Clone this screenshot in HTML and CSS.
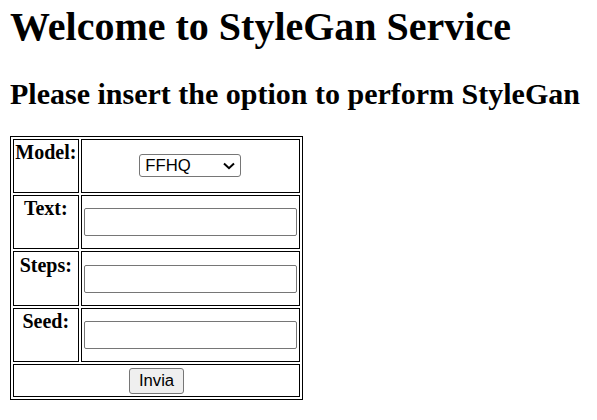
FILE: index.html
```html
<!DOCTYPE html>
<html>
<head>
<meta charset="utf-8">
<title>StyleGan Service</title>
<link rel="stylesheet" href="styles.css">
</head>
<body>
<h1 class="title">Welcome to StyleGan Service</h1>
<h2 class="subtitle">Please insert the option to perform StyleGan</h2>
<form class="form">
<table class="opts">
<tr class="row">
<th class="label">Model:</th>
<td class="field field-center"><span class="select-wrap"><select class="select"><option>FFHQ</option></select><svg class="chev" width="12" height="8" viewBox="0 0 12 8"><path d="M1 1.5 L6 6.2 L11 1.5" fill="none" stroke="#000" stroke-width="2"/></svg></span></td>
</tr>
<tr class="row">
<th class="label">Text:</th>
<td class="field"><input class="text" type="text"></td>
</tr>
<tr class="row">
<th class="label">Steps:</th>
<td class="field"><input class="text" type="text"></td>
</tr>
<tr class="row">
<th class="label">Seed:</th>
<td class="field"><input class="text" type="text"></td>
</tr>
<tr class="row-submit">
<td class="field field-center" colspan="2"><button class="btn" type="submit">Invia</button></td>
</tr>
</table>
</form>
</body>
</html>
```
FILE: styles.css
```css
html { background: #fff; }
body {
  margin: 0 10px 10px;
  padding-top: 3px;
  font-family: "Liberation Serif", "Times New Roman", serif;
  color: #000;
}
.title {
  font-size: 40px;
  font-weight: bold;
  margin: 0 0 26.8px;
}
.subtitle {
  font-size: 30px;
  font-weight: bold;
  margin: 24.9px 0 24.9px;
}
.form { margin: 0; }
.opts {
  border: 1px solid #000;
  border-spacing: 2px;
  width: 293px;
}
.row { height: 54.4px; }
.row-submit { height: 33px; }
.label, .field {
  border: 1px solid #000;
  padding: 1.25px;
}
.field { padding: 1.25px 2px; }
.label {
  font-size: 20px;
  font-weight: bold;
  vertical-align: top;
  text-align: center;
  width: 60px;
}
.field {
  vertical-align: middle;
  text-align: left;
}
.field-center { text-align: center; }
.select-wrap {
  position: relative;
  display: inline-block;
  vertical-align: middle;
}
.select {
  display: block;
  -webkit-appearance: none;
  appearance: none;
  box-sizing: border-box;
  width: 102px;
  height: 23px;
  margin: 0;
  font-family: "Liberation Sans", Arial, sans-serif;
  font-size: 16.7px;
  border: 1px solid #767676;
  border-radius: 3px;
  background: #fff;
  color: #000;
  padding: 0 0 0 5px;
  text-align: left;
}
.chev {
  position: absolute;
  right: 6px;
  top: 8px;
  pointer-events: none;
}
.text {
  display: block;
  box-sizing: border-box;
  width: 100%;
  height: 28px;
  margin: 0;
  border: 1px solid #767676;
  border-radius: 2px;
  font-family: "Liberation Sans", Arial, sans-serif;
  font-size: 16.7px;
}
.btn {
  box-sizing: border-box;
  width: 55px;
  height: 26px;
  font-family: "Liberation Sans", Arial, sans-serif;
  font-size: 16.7px;
  background: #efefef;
  border: 1px solid #767676;
  border-radius: 3px;
  color: #000;
  padding: 0;
}
```
